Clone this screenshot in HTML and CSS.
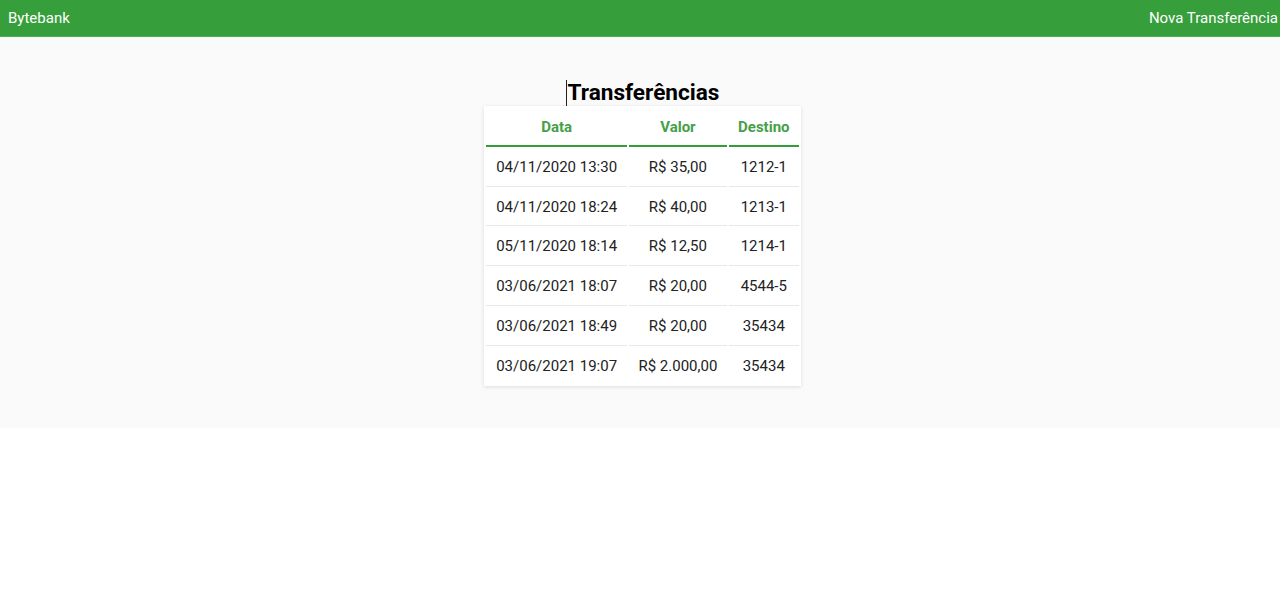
FILE: index.html
```html
<!DOCTYPE html>
<html lang="pt-BR">
<head>
<meta charset="utf-8">
<title>Bytebank</title>
<link rel="stylesheet" href="styles.css">
</head>
<body>
<header class="topbar">
  <span class="brand">Bytebank</span>
  <span class="nav-link">Nova Transferência</span>
</header>
<main class="content">
  <h2 class="title"><span class="caret"></span>Transferências</h2>
  <table class="extrato">
    <thead>
      <tr><th>Data</th><th>Valor</th><th>Destino</th></tr>
    </thead>
    <tbody>
      <tr><td>04/11/2020 13:30</td><td>R$ 35,00</td><td>1212-1</td></tr>
      <tr><td>04/11/2020 18:24</td><td>R$ 40,00</td><td>1213-1</td></tr>
      <tr><td>05/11/2020 18:14</td><td>R$ 12,50</td><td>1214-1</td></tr>
      <tr><td>03/06/2021 18:07</td><td>R$ 20,00</td><td>4544-5</td></tr>
      <tr><td>03/06/2021 18:49</td><td>R$ 20,00</td><td>35434</td></tr>
      <tr><td>03/06/2021 19:07</td><td>R$ 2.000,00</td><td>35434</td></tr>
    </tbody>
  </table>
</main>
</body>
</html>
```
FILE: styles.css
```css
html, body {
  margin: 0;
  padding: 0;
  background: #ffffff;
  font-family: Roboto, "Liberation Sans", Arial, sans-serif;
}

.topbar {
  height: 36px;
  background: #369e3b;
  color: #ffffff;
  display: flex;
  align-items: center;
  justify-content: space-between;
  padding: 0 2px 0 8px;
  font-size: 15px;
  border-bottom: 1px solid #4caf50;
}

.content {
  background: #fafafa;
  padding: 43px 0 42px 5px;
  display: flex;
  flex-direction: column;
  align-items: center;
}

.title {
  margin: 0;
  font-size: 22.6px;
  line-height: 26px;
  font-weight: 700;
  color: #000;
  display: flex;
  align-items: stretch;
}

.caret {
  width: 1px;
  background: #222;
  margin-right: 1px;
}

.extrato {
  background: #ffffff;
  border-collapse: separate;
  border-spacing: 2px;
  box-shadow: 0 1px 4px rgba(0, 0, 0, 0.12);
  font-size: 15px;
  color: #222;
}

.extrato th {
  padding: 11px 9px 9px;
  line-height: 17px;
  font-size: 15px;
  font-weight: 700;
  color: #45a048;
  border-bottom: 2px solid #359c3a;
  text-align: center;
}

.extrato td {
  padding: 10px 9.7px;
  line-height: 16.7px;
  text-align: center;
  border-bottom: 1px solid #e8e8e8;
}

.extrato tbody tr:last-child td {
  border-bottom: none;
}
```
